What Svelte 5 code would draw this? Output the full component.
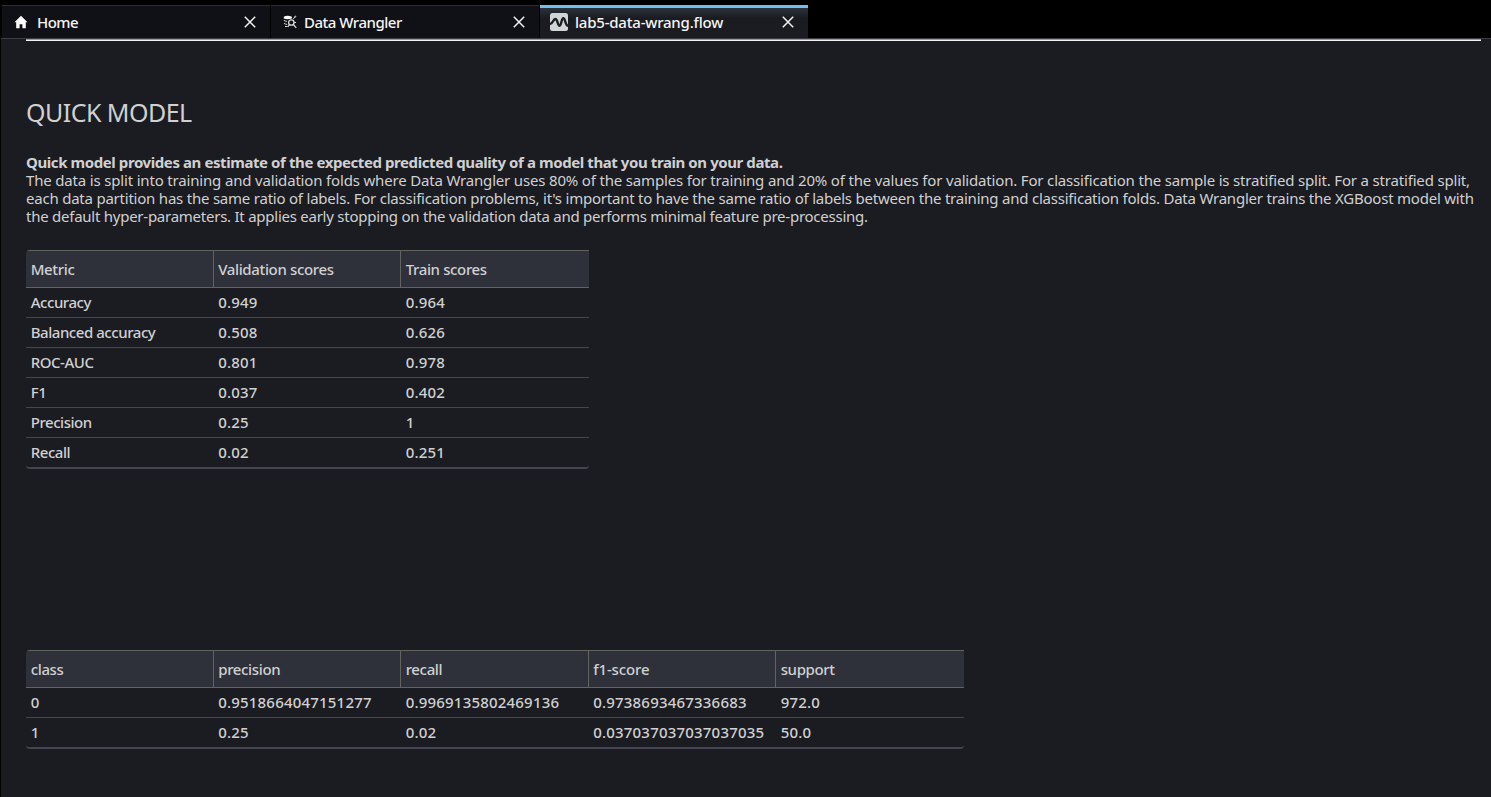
<script>
  const tabs = [
    { icon: 'home', label: 'Home', active: false },
    { icon: 'wrangler', label: 'Data Wrangler', active: false },
    { icon: 'flow', label: 'lab5-data-wrang.flow', active: true },
  ];

  const metrics = {
    head: ['Metric', 'Validation scores', 'Train scores'],
    rows: [
      ['Accuracy', '0.949', '0.964'],
      ['Balanced accuracy', '0.508', '0.626'],
      ['ROC-AUC', '0.801', '0.978'],
      ['F1', '0.037', '0.402'],
      ['Precision', '0.25', '1'],
      ['Recall', '0.02', '0.251'],
    ],
  };

  const classes = {
    head: ['class', 'precision', 'recall', 'f1-score', 'support'],
    rows: [
      ['0', '0.9518664047151277', '0.9969135802469136', '0.9738693467336683', '972.0'],
      ['1', '0.25', '0.02', '0.037037037037037035', '50.0'],
    ],
  };
</script>

{#snippet grid(data, kind)}
  <div class="table {kind}" role="table">
    <div class="row head" role="row">
      {#each data.head as h}<div class="cell" role="columnheader"><span>{h}</span></div>{/each}
    </div>
    {#each data.rows as r}
      <div class="row" role="row">
        {#each r as c}<div class="cell" class:num={/^[\d.]+$/.test(c)} role="cell"><span>{c}</span></div>{/each}
      </div>
    {/each}
  </div>
{/snippet}

<div class="app">
  <div class="tabs">
    {#each tabs as t}
      <div class="tab {t.icon}" class:active={t.active}>
        {#if t.icon === 'home'}
          <svg class="icon" width="14" height="14" viewBox="0 0 14 14"><path fill="#fff" d="M7 .8 13.5 7.300H11.8v6H8.4V9.300H5.6v4H2.2v-6H.5z" /></svg>
        {:else if t.icon === 'wrangler'}
          <svg class="icon" width="14" height="14" viewBox="0 0 14 14" fill="none" stroke="#dcdcde" stroke-width="1">
            <path fill="#fff" stroke="none" d="M.8 1.800Q4.500-.2 8.800 1.800V3.500Q4.500 4.800.8 3.500z" />
            <path d="M.8 5.300Q2.200 6.300 4 6.400M1 8.300Q2.400 9.400 4.200 9.400M2 11.500h2.400M10.300 4l1.500-2" />
            <circle cx="12.300" cy="1.600" r=".5" />
            <circle cx="8.300" cy="7.500" r="2.700" stroke-width="1.300" />
            <path d="m10.300 9.500 3 3.300M6.500 9.500l-1.700 2.500M11 7.500h2" stroke-width="1.200" />
          </svg>
        {:else}
          <svg class="icon" width="18" height="18" viewBox="0 0 18 18"><rect width="18" height="18" rx="2.500" fill="#d2d5d6" /><path d="M0 11C3 11 3 6 5.300 6S7.700 12.800 9.600 12.800 11.300 5.200 13.300 5.200 15.300 12.500 18 12.800" fill="none" stroke="#1b1d22" stroke-width="2.400" /></svg>
        {/if}
        <span class="label">{t.label}</span>
        <svg class="close" width="12" height="12" viewBox="0 0 12 12"><path d="M.8.8 11.200 11.200M11.200.8.8 11.200" stroke="#f2f2f2" stroke-width="1.500" /></svg>
      </div>
    {/each}
  </div>
  <main>
    <div class="rule"></div>
    <h1>QUICK MODEL</h1>
    <p>
      <b>Quick model provides an estimate of the expected predicted quality of a model that you train on your data.</b>
      <span class="l1">The data is split into training and validation folds where Data Wrangler uses 80% of the samples for training and 20% of the values for validation. For classification the sample is stratified split. For a stratified split,</span>
      <span class="l2">each data partition has the same ratio of labels. For classification problems, it's important to have the same ratio of labels between the training and classification folds. Data Wrangler trains the XGBoost model with</span>
      <span class="l3">the default hyper-parameters. It applies early stopping on the validation data and performs minimal feature pre-processing.</span>
    </p>
    {@render grid(metrics, 'metrics')}
    {@render grid(classes, 'classes')}
  </main>
</div>

<style>
  :global(body) { margin: 0; background: #000; overflow: hidden; }
  .app { display: flex; flex-direction: column; height: 797px; box-sizing: border-box; padding-top: 5px; background: #000; font-family: 'Noto Sans', sans-serif; font-size: 15px; color: #d0d0d2; }
  .tabs { display: flex; gap: 1px; height: 33px; padding-left: 2px; }
  .tab { box-sizing: border-box; display: flex; align-items: center; width: 268px; height: 33px; padding: 0 14px 1px 12px; border-top: 1px solid #2b2c31; background: #101116; color: #f4f4f4; }
  .tab.flow { padding: 0 14px 2px 10px; border-top: 3px solid #75beee; background: linear-gradient(#2d323c, #1b1c21 10px); }
  .label { flex: 1; white-space: nowrap; margin-left: 9px; line-height: 20px; letter-spacing: -0.55px; font-weight: 500; }
  .wrangler .label { margin-left: 7px; letter-spacing: -0.48px; }
  .flow .label { margin-left: 7px; letter-spacing: -0.21px; }
  .icon, .close { display: block; flex: none; }
  main { flex: 1; margin-left: 1px; padding-left: 25px; border-top: 1px solid #3b3c45; background: #1b1c21; }
  .rule { width: 1455px; height: 2px; box-sizing: border-box; border-top: 1px solid #9a9a9c; background: #f2f2f2; }
  h1 { margin: 55px 0 0; font-weight: 400; font-size: 25px; line-height: 32px; letter-spacing: -0.53px; }
  p { margin: 25px 0 0; line-height: 18px; white-space: nowrap; }
  p b, p span { display: block; width: max-content; }
  p b { letter-spacing: -0.415px; }
  .l1 { letter-spacing: -0.173px; }
  .l2 { letter-spacing: -0.221px; }
  .l3 { letter-spacing: -0.25px; }
  .table { margin-top: 25px; font-weight: 500; overflow: hidden; border-bottom: 2px solid #444550; border-radius: 4px 0 4px 4px; box-sizing: border-box; }
  .metrics { width: 563px; height: 219px; }
  .classes { width: 938px; height: 99px; margin-top: 181px; }
  .row { display: flex; box-sizing: border-box; height: 30px; border-bottom: 1px solid #45464e; }
  .row:last-child { border-bottom: 0; height: 29px; }
  .row.head { height: 38px; background: #2f313a; border-top: 1px solid #62645f; border-bottom: 1px solid #62645f; }
  .cell { box-sizing: border-box; display: flex; align-items: center; width: 187.5px; flex: none; padding: 0 0 2px 4.700px; white-space: nowrap; letter-spacing: -0.45px; }
  .cell.num { letter-spacing: 0.2px; }
  .head .cell { padding-bottom: 0; border-right: 1px solid #62645f; letter-spacing: -0.36px; }
  .classes .head .cell:nth-child(4) { letter-spacing: -0.12px; }
  .head .cell:last-child { border-right: 0; }
</style>
